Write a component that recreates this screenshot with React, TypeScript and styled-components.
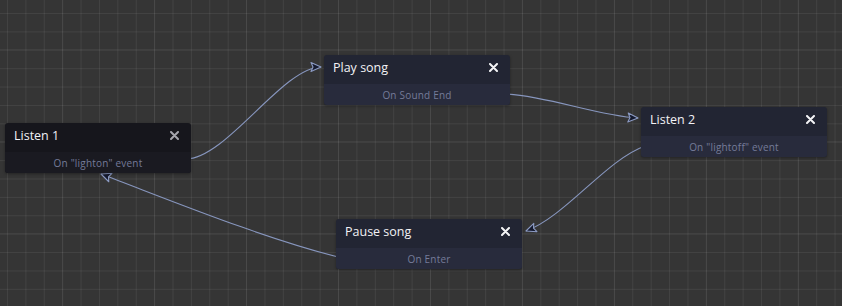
import React from "react";
import styled, { createGlobalStyle } from "styled-components";

const Global = createGlobalStyle`
  html, body { margin: 0; padding: 0; background: #353535; }
  body { font-family: "Open Sans", "Noto Sans", sans-serif; }
`;

const Canvas = styled.div`
  position: relative;
  width: 842px;
  height: 306px;
  overflow: hidden;
  background-color: #353535;
  background-image:
    linear-gradient(to right, rgba(255,255,255,0.04) 1px, transparent 1px),
    linear-gradient(to bottom, rgba(255,255,255,0.04) 1px, transparent 1px),
    linear-gradient(to right, rgba(255,255,255,0.065) 1px, transparent 1px),
    linear-gradient(to bottom, rgba(255,255,255,0.065) 1px, transparent 1px);
  background-size: 92px 92px, 92px 92px, 18.4px 18.4px, 18.4px 18.4px;
  background-position: 62px 0, 0 49px, 7px 0, 0 13px;
`;

const Edges = styled.svg`
  position: absolute;
  left: 0;
  top: 0;
  width: 842px;
  height: 306px;
  pointer-events: none;
`;

const Node = styled.div<{ $dark?: boolean }>`
  position: absolute;
  width: 186px;
  border-radius: 3px;
  overflow: hidden;
  background: ${(p) => (p.$dark ? "#16161c" : "#222533")};
  box-shadow: 0 1px 3px rgba(0, 0, 0, 0.35);
`;

const Header = styled.div`
  display: flex;
  align-items: flex-start;
  justify-content: space-between;
  height: 29px;
  box-sizing: border-box;
  padding: 5px 12px 0 9px;
`;

const Title = styled.span`
  color: #f2f2f5;
  font-size: 12.5px;
  line-height: 15px;
`;

const Close = styled.span<{ $dim?: boolean }>`
  display: flex;
  align-items: center;
  height: 15px;
  color: ${(p) => (p.$dim ? "#a5a5ad" : "#f4f4f6")};
`;

const Body = styled.div<{ $dark?: boolean }>`
  display: flex;
  align-items: center;
  justify-content: center;
  height: 21px;
  background: ${(p) => (p.$dark ? "#1a1a21" : "#282b3c")};
  color: #757b99;
  font-size: 10px;
  letter-spacing: 0.2px;
`;

type NodeData = {
  title: string;
  sub: string;
  x: number;
  y: number;
  dark?: boolean;
};

const nodes: NodeData[] = [
  { title: "Listen 1", sub: 'On "lighton" event', x: 5, y: 123, dark: true },
  { title: "Play song", sub: "On Sound End", x: 324, y: 55 },
  { title: "Listen 2", sub: 'On "lightoff" event', x: 641, y: 107 },
  { title: "Pause song", sub: "On Enter", x: 336, y: 219 },
];

const CloseIcon = () => (
  <svg width="9" height="9" viewBox="0 0 9 9">
    <path d="M1 1 L8 8 M8 1 L1 8" stroke="currentColor" strokeWidth="2" strokeLinecap="round" />
  </svg>
);

const edges = [
  "M186,159 C226,159 283,67 321,67",
  "M506,94 C548,96 598,116 638,118",
  "M645,146 C606,160 566,216 526,231",
  "M342,258 C262,238 170,200 101,174",
];

export default function App() {
  return (
    <>
      <Global />
      <Canvas>
        <Edges viewBox="0 0 842 306">
          <defs>
            <marker
              id="arrow"
              viewBox="0 0 12 12"
              refX="11"
              refY="6"
              markerWidth="12"
              markerHeight="12"
              markerUnits="userSpaceOnUse"
              orient="auto"
            >
              <path d="M1,1.5 L11,6 L1,10.5 L3,6 Z" fill="#151a2e" stroke="#8c9bc4" strokeWidth="1.1" strokeLinejoin="round" />
            </marker>
          </defs>
          {edges.map((d, i) => (
            <path key={i} d={d} fill="none" stroke="#8796be" strokeWidth="1.1" markerEnd="url(#arrow)" />
          ))}
        </Edges>
        {nodes.map((n) => (
          <Node key={n.title} $dark={n.dark} style={{ left: n.x, top: n.y }}>
            <Header>
              <Title>{n.title}</Title>
              <Close $dim={n.dark}>
                <CloseIcon />
              </Close>
            </Header>
            <Body $dark={n.dark}>{n.sub}</Body>
          </Node>
        ))}
      </Canvas>
    </>
  );
}
